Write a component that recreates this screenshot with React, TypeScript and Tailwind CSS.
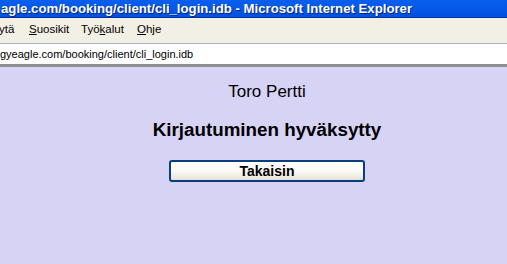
export default function App() {
  return (
    <div className="flex h-[264px] w-[507px] flex-col overflow-hidden bg-[#d7d3f5]" style={{ fontFamily: '"Liberation Sans", Arial, sans-serif' }}>
      {/* Title bar */}
      <div className="h-[18px] shrink-0 border-b border-[#0032a8] bg-gradient-to-b from-[#0a5fef] to-[#0050e0]">
        <div className="whitespace-nowrap pl-[1px] text-[13.2px] font-bold leading-[18px] text-white [text-shadow:1px_1px_0_#0a246a]">
          agle.com/booking/client/cli_login.idb - Microsoft Internet Explorer
        </div>
      </div>

      {/* Menu bar */}
      <div className="flex h-[26px] shrink-0 items-center border-b border-[#a3b5cc] bg-[#f2efe4] pb-[1px] text-[11.5px] text-black">
        <span className="w-[30px] -ml-[1px]">ytä</span>
        <span className="w-[52px]"><u>S</u>uosikit</span>
        <span className="w-[56px]">Työ<u>k</u>alut</span>
        <span><u>O</u>hje</span>
      </div>

      {/* Address bar */}
      <div className="flex h-[23px] shrink-0 items-center border-b-[3px] border-[#8d8f91] bg-white text-[11px] text-black">
        <span className="whitespace-nowrap">gyeagle.com/booking/client/cli_login.idb</span>
      </div>

      {/* Content */}
      <div className="flex flex-col items-center pl-[27px] pt-[15px] text-black">
        <div className="text-[17px] leading-[20px]">Toro Pertti</div>
        <div className="mt-[17px] text-[18.8px] font-bold leading-[22px]">Kirjautuminen hyväksytty</div>
        <button className="mt-[19px] h-[22px] w-[196px] rounded-[3px] border-2 border-[#0a3f7d] bg-gradient-to-b from-white via-[#fbfaf6] to-[#e6e2d6] text-[14px] font-bold leading-[16px] text-black">
          Takaisin
        </button>
      </div>
    </div>
  );
}
